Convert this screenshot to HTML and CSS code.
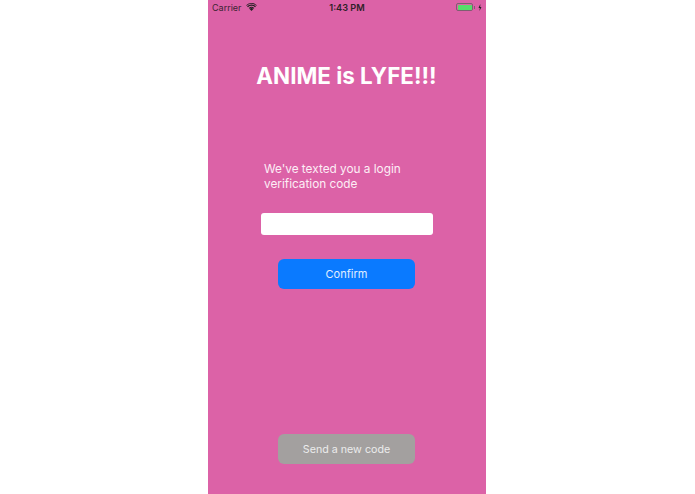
FILE: index.html
```html
<!DOCTYPE html>
<html lang="en">
<head>
  <meta charset="UTF-8" />
  <title>ANIME is LYFE!!!</title>
  <link rel="stylesheet" href="styles.css">
</head>
<body>
  <div class="phone">
    <div class="statusbar">
      <div class="status-left">
        <span>Carrier</span>
        <svg class="wifi" viewBox="0 0 12 9" width="11" height="8">
          <path d="M6 9 L3.9 6.7 A3 3 0 0 1 8.1 6.7 Z" fill="#222"/>
          <path d="M2.9 5.6 A4.5 4.5 0 0 1 9.1 5.6 L8.3 6.4 A3.4 3.4 0 0 0 3.7 6.4 Z" fill="#222"/>
          <path d="M1 3.7 A7 7 0 0 1 11 3.7 L10 4.7 A5.6 5.6 0 0 0 2 4.7 Z" fill="#222"/>
          <path d="M0 2.5 A8.6 8.6 0 0 1 12 2.5 L11.4 3.1 A7.8 7.8 0 0 0 0.6 3.1 Z" fill="#222"/>
        </svg>
      </div>
      <div class="status-time">1:43 PM</div>
      <div class="status-right">
        <div class="battery"><div class="battery-fill"></div></div>
        <div class="battery-tip"></div>
        <svg class="bolt" viewBox="0 0 4 8" width="4" height="7">
          <path d="M2.4 0 L0.3 4.5 H1.8 L1.4 8 L3.7 3.3 H2.2 Z" fill="#222"/>
        </svg>
      </div>
    </div>

    <h1 class="title">ANIME is LYFE!!!</h1>

    <p class="prompt">We've texted you a login verification code</p>
    <input class="code-input" type="text">
    <button class="btn btn-confirm">Confirm</button>

    <div class="spacer"></div>
    <button class="btn btn-resend">Send a new code</button>
  </div>
</body>
</html>
```

FILE: styles.css
```css
html, body {
  height: 100%;
  margin: 0;
  padding: 0;
  background: #fff;
  font-family: 'Inter', 'Liberation Sans', sans-serif;
  overflow: hidden;
}
.phone {
  width: 278px;
  height: 494px;
  margin-left: 208px;
  background: #dc62a7;
  display: flex;
  flex-direction: column;
  align-items: center;
  color: #fff;
}
.statusbar {
  align-self: stretch;
  height: 14px;
  padding: 0 4px 0 4px;
  display: grid;
  grid-template-columns: 1fr auto 1fr;
  align-items: center;
  font-size: 9px;
  color: #3d2433;
}
.status-left {
  display: flex;
  align-items: center;
  gap: 4px;
}
.wifi { margin-top: -1px; }
.status-time {
  font-size: 9.2px;
  font-weight: 600;
  color: #2e1f28;
}
.status-right {
  display: flex;
  align-items: center;
  justify-content: flex-end;
}
.battery {
  width: 14px;
  height: 5px;
  border: 1px solid #7d5f70;
  border-radius: 2px;
  padding: 0.5px;
  box-sizing: content-box;
  display: flex;
}
.battery-fill {
  flex: 1;
  background: #55dd6a;
  border-radius: 1px;
}
.battery-tip {
  width: 1px;
  height: 3px;
  background: #7d5f70;
  margin: 0 3px 0 1px;
}
.title {
  margin: 48px 1px 0 0;
  font-size: 22.4px;
  line-height: 28px;
  font-weight: 700;
}
.prompt {
  align-self: flex-start;
  width: 170px;
  margin: 72px 0 0 56px;
  font-size: 11.8px;
  line-height: 15px;
  color: #fdeef6;
}
.code-input {
  width: 172px;
  height: 22px;
  box-sizing: border-box;
  margin: 21px 0 0 -1px;
  border: none;
  border-radius: 3px;
  background: #fff;
}
.btn {
  width: 137px;
  height: 30px;
  margin-right: 1px;
  border: none;
  border-radius: 6px;
  font-family: inherit;
  font-size: 11px;
}
.btn-confirm {
  margin-top: 24px;
  background: #0a7aff;
  color: #e0eeff;
}
.spacer { flex: 1; }
.btn-resend {
  margin-bottom: 30px;
  background: #a3a09f;
  color: #ececec;
  font-size: 10.7px;
}
```
